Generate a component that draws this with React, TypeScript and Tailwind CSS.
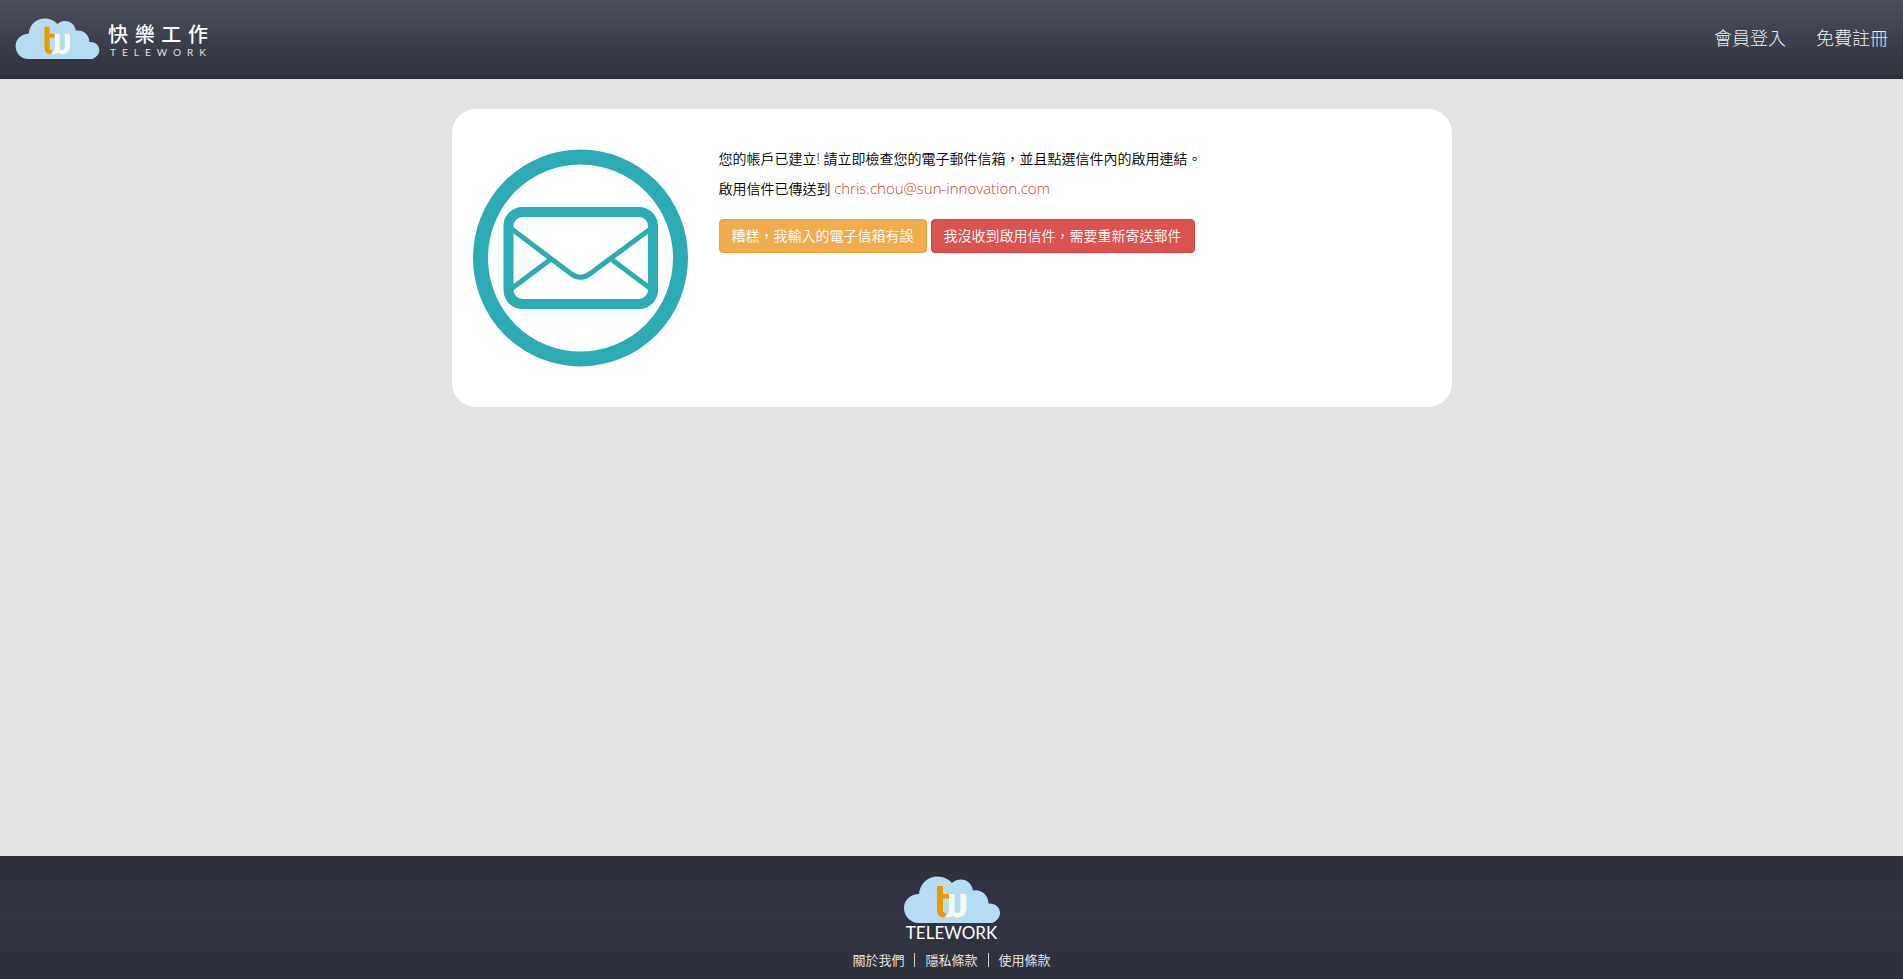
import React from "react";

function CloudLogo({ className }: { className: string }) {
  return (
    <svg viewBox="0 0 96 47" className={className} aria-hidden="true">
      <path
        d="M15 47C6 47 0 40 0 32C0 24 7 18 15 18C16 7 24 0.500 33.500 0.500C40 0.500 45 3.500 48 7C51 4 54 3.500 57 3.500C63 3.500 68 8 69 14.500C76 13 84.500 18 84.500 27.500C91 27 96 31 96 37C96 41 93 45 88 47Z"
        fill="#b5dcf0"
      />
      <path d="M33 10h6v8h6v4.500H39v12.500q0 2 3.500 2l-2 4.500q-7.500 0-7.500-7z" fill="#e89a05" />
      <path
        d="M45 18H50.500V34C50.500 36 51.500 37 53 37C55.500 37 56.500 35 56.500 31V23Q56.500 20.500 56 18H61.500Q62.500 20.500 62.500 24V31C62.500 38 59.500 41.500 54 41.500C52 41.500 50.500 41 49 39.500C47.500 41 45 41.500 40.500 41.500C43 40 45 37 45 33Z"
        fill="#f6f9ec"
      />
    </svg>
  );
}

function MailIcon() {
  return (
    <svg viewBox="0 0 216 218" className="h-[218px] w-[216px]" fill="none" stroke="#2cabb5" aria-hidden="true">
      <ellipse cx="107.500" cy="109" rx="100" ry="101" strokeWidth="15" />
      <rect x="35.500" y="63" width="144.500" height="92" rx="14" strokeWidth="10" />
      <path
        d="M38 79.500L97 124Q107.500 132.500 118 124L178 79.500M38 140L78 110M178 140L138 110"
        strokeWidth="5"
      />
    </svg>
  );
}

function SpacedWord({ word, className }: { word: string; className: string }) {
  return (
    <span className={className}>
      {word.split("").map((letter, index) => (
        <span key={index}>{letter}</span>
      ))}
    </span>
  );
}

const footerLinks = ["關於我們", "隱私條款", "使用條款"];

export default function App() {
  return (
    <div className="flex min-h-screen flex-col bg-[#e2e2e2] font-['Open_Sans','Noto_Sans_CJK_TC',sans-serif] text-sm font-[350] text-black">
      <header className="flex h-[79px] items-center justify-between bg-linear-to-b from-[#4b4f5b] to-[#2f303e] px-[15px] pb-1">
        <a href="#" className="flex items-center gap-2 pt-[2px] text-white">
          <CloudLogo className="h-[41px] w-[85px]" />
          <span className="flex w-[100px] flex-col pt-1">
            <SpacedWord word="快樂工作" className="flex justify-between text-xl leading-[22px] font-medium" />
            <SpacedWord word="TELEWORK" className="flex justify-between px-[2px] font-[Lato,sans-serif] text-[10px] leading-3 font-normal text-[#e0e0e0]" />
          </span>
        </a>
        <nav className="flex gap-[30px] text-lg font-light text-[#f0f0f0]">
          <a href="#">會員登入</a>
          <a href="#">免費註冊</a>
        </nav>
      </header>

      <main className="flex-1 px-4 py-[30px]">
        <section className="mx-auto flex max-w-[1000px] gap-[30px] rounded-[24px] bg-white px-[21px] py-10">
          <MailIcon />
          <div>
            <p className="leading-5">您的帳戶已建立! 請立即檢查您的電子郵件信箱，並且點選信件內的啟用連結。</p>
            <p className="mt-[10px] leading-5">
              啟用信件已傳送到{" "}
              <span className="text-[15px] leading-none font-light text-[#d8401f]">chris.chou@sun-innovation.com</span>
            </p>
            <div className="mt-5 flex gap-1 leading-5 text-white">
              <button type="button" className="rounded border border-[#eea236] bg-[#f0ad4e] px-3 py-[6px]">
                糟糕，我輸入的電子信箱有誤
              </button>
              <button type="button" className="rounded border border-[#d43f3a] bg-[#d9534f] px-3 py-[6px]">
                我沒收到啟用信件，需要重新寄送郵件
              </button>
            </div>
          </div>
        </section>
      </main>

      <footer className="flex h-[123px] flex-col items-center border-b border-[#1c2c3c] bg-linear-to-b from-[#2e303b] via-[#323444] to-[#2e313b] pt-5 text-white">
        <CloudLogo className="h-[47px] w-24" />
        <span className="font-[Lato,sans-serif] text-[17px] leading-5 font-normal">TELEWORK</span>
        <nav className="mt-[7px] flex items-center text-[13px] leading-5 text-[#f0f0f0]">
          {footerLinks.map((label, index) => (
            <React.Fragment key={label}>
              {index > 0 && <span className="mx-[10px] h-[14px] w-px bg-[#d0d0d0]" />}
              <a href="#">{label}</a>
            </React.Fragment>
          ))}
        </nav>
      </footer>
    </div>
  );
}
